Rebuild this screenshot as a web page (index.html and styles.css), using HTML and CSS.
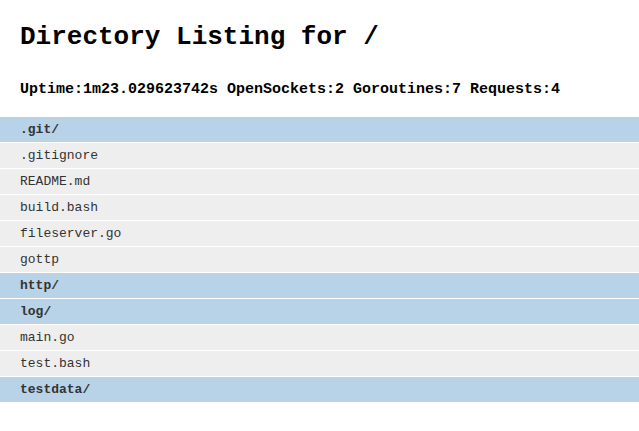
FILE: index.html
```html
<!DOCTYPE html>
<html>
<head>
<meta charset="utf-8">
<link rel="stylesheet" href="styles.css">
</head>
<body>
<div class="header">
  <h1 class="title">Directory Listing for /</h1>
  <p class="stats">Uptime:1m23.029623742s OpenSockets:2 Goroutines:7 Requests:4</p>
</div>
<ul class="listing">
  <li class="dir">.git/</li>
  <li class="file">.gitignore</li>
  <li class="file">README.md</li>
  <li class="file">build.bash</li>
  <li class="file">fileserver.go</li>
  <li class="file">gottp</li>
  <li class="dir">http/</li>
  <li class="dir">log/</li>
  <li class="file">main.go</li>
  <li class="file">test.bash</li>
  <li class="dir">testdata/</li>
</ul>
</body>
</html>
```
FILE: styles.css
```css
html, body {
  margin: 0;
  padding: 0;
  background: #ffffff;
  font-family: "Liberation Mono", "Courier New", monospace;
}
.header {
  padding: 0 20px;
}
.title {
  margin: 0;
  padding-top: 21px;
  font-size: 26px;
  line-height: 32px;
  font-weight: bold;
  color: #000;
}
.stats {
  margin: 0;
  padding-top: 28px;
  font-size: 15px;
  line-height: 18px;
  font-weight: bold;
  color: #000;
}
.listing {
  list-style: none;
  margin: 18px 0 0 0;
  padding: 0;
  display: flex;
  flex-direction: column;
  gap: 1px;
}
.listing li {
  height: 25px;
  line-height: 25px;
  padding-left: 20px;
  font-size: 13px;
  color: #333;
}
.file {
  background: #eeeeee;
}
.dir {
  background: #b8d2e7;
  font-weight: bold;
}
```
